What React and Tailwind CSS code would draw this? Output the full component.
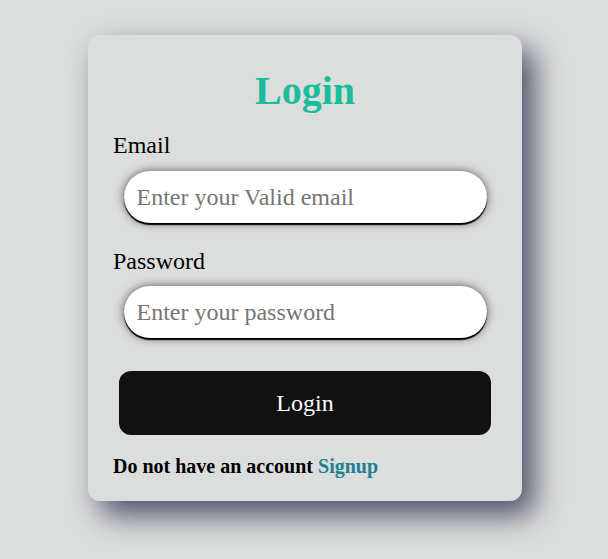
export default function App() {
  return (
    <div className="min-h-[559px] w-full bg-[#dcdedd] pt-[35px] font-['Liberation_Serif',serif]">
      <div className="ml-[88px] flex h-[466px] w-[434px] flex-col rounded-[12px] bg-[#dcdedd] px-[25px] shadow-[12px_14px_30px_#4f4e68]">
        <h1 className="mt-[33px] text-center text-[40px] font-bold leading-[46px] text-[#1abc9c]">Login</h1>
        <label className="mt-[17px] text-[24px] leading-[28px] text-black">Email</label>
        <input
          type="email"
          placeholder="Enter your Valid email"
          className="mx-auto mt-[12px] h-[52px] w-[363px] rounded-full bg-white px-[13px] text-[24px] text-black outline-none placeholder:text-[#757575] shadow-[0_2px_1px_#000,0_0_10px_#555]"
        />
        <label className="mt-[24px] text-[24px] leading-[28px] text-black">Password</label>
        <input
          type="password"
          placeholder="Enter your password"
          className="mx-auto mt-[11px] h-[52px] w-[363px] rounded-full bg-white px-[13px] text-[24px] text-black outline-none placeholder:text-[#757575] shadow-[0_2px_1px_#000,0_0_10px_#555]"
        />
        <button className="mx-auto mt-[33px] h-[64px] w-[372px] rounded-[12px] bg-[#111111] text-[24px] text-white">
          Login
        </button>
        <p className="mt-[20px] text-[20px] font-bold leading-[23px] text-black">
          Do not have an account <a className="text-[#207f92]">Signup</a>
        </p>
      </div>
    </div>
  );
}
